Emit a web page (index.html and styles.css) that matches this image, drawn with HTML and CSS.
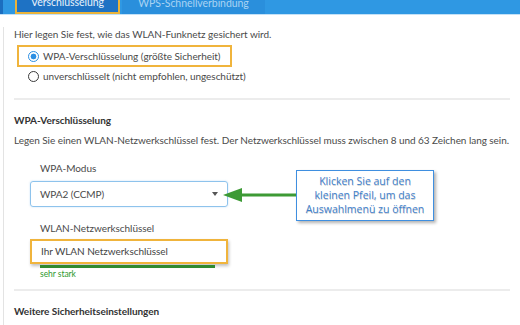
FILE: index.html
```html
<!DOCTYPE html>
<html lang="de">
<head>
<meta charset="utf-8">
<title>WLAN Sicherheit</title>
<link rel="stylesheet" href="styles.css">
</head>
<body>
<nav class="tabs">
  <div class="tab-edge"></div>
  <div class="tab tab-active">Verschlüsselung</div>
  <div class="tab tab-idle">WPS-Schnellverbindung</div>
  <div class="tab-rest"></div>
</nav>
<main class="content">
  <p class="intro">Hier legen Sie fest, wie das WLAN-Funknetz gesichert wird.</p>
  <div class="radios">
    <label class="radio radio-marked"><span class="dot dot-on"></span>WPA-Verschlüsselung (größte Sicherheit)</label>
    <label class="radio radio-plain"><span class="dot"></span>unverschlüsselt (nicht empfohlen, ungeschützt)</label>
  </div>
  <hr class="sep">
  <h2 class="heading">WPA-Verschlüsselung</h2>
  <p class="desc">Legen Sie einen WLAN-Netzwerkschlüssel fest. Der Netzwerkschlüssel muss zwischen 8 und 63 Zeichen lang sein.</p>
  <div class="field">
    <div class="field-label">WPA-Modus</div>
    <div class="select"><span>WPA2 (CCMP)</span><span class="caret"></span></div>
  </div>
  <div class="field field-key">
    <div class="field-label">WLAN-Netzwerkschlüssel</div>
    <div class="input">Ihr WLAN Netzwerkschlüssel</div>
    <div class="strength"></div>
    <div class="strength-label">sehr stark</div>
  </div>
  <hr class="sep sep-bottom">
  <h2 class="heading heading-bottom">Weitere Sicherheitseinstellungen</h2>
</main>
<svg class="note-arrow" width="80" height="20" viewBox="0 0 80 20">
  <polygon points="0,9 19,2 19,16" fill="#3d9a35"/>
  <rect x="17" y="7.5" width="63" height="3" fill="#3d9a35"/>
</svg>
<div class="callout">Klicken Sie auf den<br>kleinen Pfeil, um das<br>Auswahlmenü zu öffnen</div>
</body>
</html>
```
FILE: styles.css
```css
* { box-sizing: border-box; }
html, body { margin: 0; padding: 0; background: #fff; }
body {
  width: 520px;
  height: 325px;
  overflow: hidden;
  position: relative;
  font-family: Lato, "Open Sans", sans-serif;
  font-size: 10px;
  letter-spacing: -0.05px;
  color: #4a4a4a;
}
.tabs {
  display: flex;
  height: 23px;
  margin-top: -8px;
  background: #2f98e3;
  border-bottom: 1px solid #c3e1f7;
}
.tab-edge { width: 3px; background: #1b6ec0; }
.tab {
  line-height: 22px;
  font-size: 10.5px;
  text-align: center;
}
.tab-active {
  margin-left: 12px;
  width: 105px;
  background: #1e72c4;
  color: #e8f2fb;
  border: 2px solid #eab33a;
  border-top: none;
  line-height: 20px;
}
.tab-idle {
  width: 143px;
  margin-left: 2px;
  background: #2a8fdc;
  color: #a9d3f3;
}
.tab-rest { flex: 1; }
.content {
  margin-left: 3px;
  border-left: 1px solid #e3e3e3;
  padding: 0 10px 0 10px;
  height: 310px;
}
p, h2 { margin: 0; }
.intro { margin-top: 12px; line-height: 14px; }
.radios { display: flex; flex-direction: column; align-items: flex-start; margin-top: 4px; }
.radio { display: flex; align-items: center; line-height: 18px; }
.radio-marked {
  margin-left: 3px;
  padding: 0 10px 0 9px;
  border: 2px solid #f0b43c;
}
.radio-plain { margin-left: 14px; }
.dot {
  width: 11px; height: 11px;
  border-radius: 50%;
  border: 1.5px solid #3a3a3a;
  margin-right: 4px;
  flex: none;
}
.dot-on {
  border-color: #2b8fe3;
  background: radial-gradient(circle, #2b8fe3 0 2.6px, #fff 3.2px);
}
.sep {
  border: none;
  border-top: 2px solid #ececec;
  margin: 13px 0 0 0;
  height: 0;
}
.heading { font-size: 10px; font-weight: 700; color: #333; line-height: 14px; margin-top: 13px; }
.desc { line-height: 14px; margin-top: 6px; white-space: nowrap; }
.field { margin-left: 16px; width: 198px; }
.field-label { line-height: 14px; margin-top: 14px; padding-left: 10px; }
.select {
  margin-top: 6px;
  height: 26px;
  border: 1px solid #8ec3ec;
  border-radius: 3px;
  box-shadow: 0 0 2px rgba(80, 160, 230, 0.35);
  display: flex;
  align-items: center;
  justify-content: space-between;
  padding: 0 9px 0 9px;
}
.caret {
  width: 0; height: 0;
  border-left: 3.5px solid transparent;
  border-right: 3.5px solid transparent;
  border-top: 4px solid #555;
}
.field-key .field-label { margin-top: 14px; }
.input {
  margin-top: 4px;
  height: 25px;
  border: 2px solid #f0b43c;
  box-shadow: 1px 2px 3px rgba(0, 0, 0, 0.25);
  line-height: 21px;
  padding-left: 9px;
  color: #444;
}
.strength {
  margin: 1px 0 0 10px;
  width: 175px;
  height: 3px;
  background: #2f8a2f;
}
.strength-label {
  padding-left: 10px;
  font-size: 8.5px;
  line-height: 10px;
  margin-top: 1px;
  color: #2f9a2f;
}
.sep-bottom { margin-top: 10px; }
.heading-bottom { margin-top: 13px; }
.note-arrow {
  position: absolute;
  left: 223px;
  top: 186px;
}
.callout {
  position: absolute;
  left: 296px;
  top: 170px;
  width: 138px;
  height: 51px;
  border: 1.5px solid #3f8fe0;
  background: #fff;
  box-shadow: 2px 2px 3px rgba(0, 0, 0, 0.3);
  color: #3f7fcc;
  text-align: center;
  font-family: "Open Sans", sans-serif;
  font-size: 10.5px;
  line-height: 14px;
  padding-top: 3px;
  letter-spacing: 0;
  text-shadow: 0.5px 0.5px 0.5px rgba(0, 0, 0, 0.2);
}
```
